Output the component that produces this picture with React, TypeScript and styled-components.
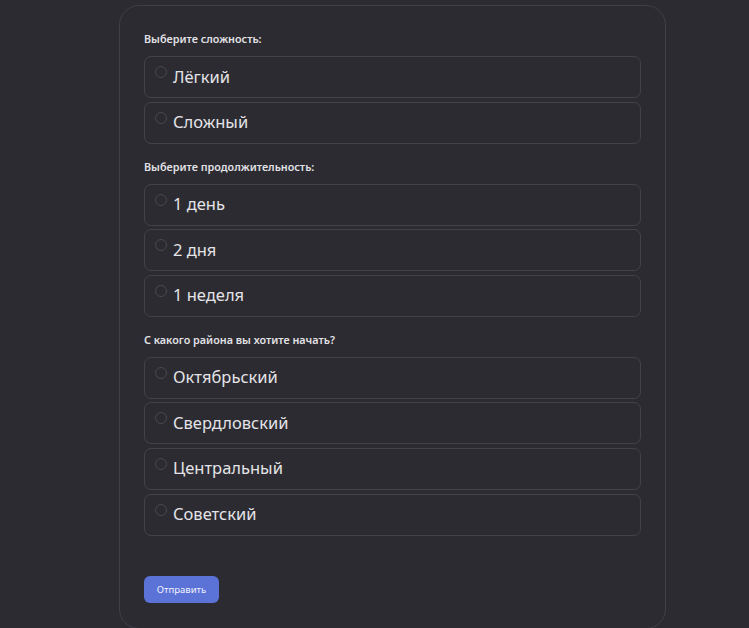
import React from "react";
import styled, { createGlobalStyle } from "styled-components";

const Global = createGlobalStyle`
  html, body { margin: 0; padding: 0; background: #2c2b31; }
  body { font-family: "Noto Sans", "Open Sans", sans-serif; }
`;

const Page = styled.div`
  min-height: 628px;
  padding: 5px 0 0 119px;
  box-sizing: border-box;
`;

const Card = styled.form`
  width: 547px;
  box-sizing: border-box;
  border: 1px solid #403f46;
  border-radius: 20px;
  padding: 25px 24px 25px 24px;
  display: flex;
  flex-direction: column;
`;

const Question = styled.div`
  font-size: 10.8px;
  font-weight: 600;
  color: #e2e2e6;
  line-height: 15px;
  margin: 0 0 10px 0;
`;

const Section = styled.div`
  display: flex;
  flex-direction: column;
  gap: 3.6px;
  margin-bottom: 15px;
`;

const Option = styled.label`
  height: 42px;
  box-sizing: border-box;
  border: 1px solid #434249;
  border-radius: 7px;
  display: flex;
  align-items: center;
  padding-left: 10px;
  cursor: pointer;
`;

const Radio = styled.span`
  width: 12px;
  height: 12px;
  border-radius: 50%;
  border: 1px solid #4a4950;
  box-sizing: border-box;
  align-self: flex-start;
  margin-top: 9px;
  margin-right: 6px;
`;

const OptionText = styled.span`
  font-size: 16.5px;
  color: #e4e4e8;
  line-height: 20px;
  margin-top: -1px;
`;

const Submit = styled.button`
  align-self: flex-start;
  margin-top: 25px;
  width: 75px;
  height: 27px;
  border: none;
  border-radius: 6px;
  background: #5b72d7;
  color: #f2f4ff;
  font-family: "Noto Sans", "Open Sans", sans-serif;
  font-size: 9.5px;
  padding: 0;
`;

const groups: { q: string; options: string[] }[] = [
  { q: "Выберите сложность:", options: ["Лёгкий", "Сложный"] },
  { q: "Выберите продолжительность:", options: ["1 день", "2 дня", "1 неделя"] },
  {
    q: "С какого района вы хотите начать?",
    options: ["Октябрьский", "Свердловский", "Центральный", "Советский"],
  },
];

export default function App() {
  return (
    <>
      <Global />
      <Page>
        <Card onSubmit={(e) => e.preventDefault()}>
          {groups.map((g) => (
            <React.Fragment key={g.q}>
              <Question>{g.q}</Question>
              <Section>
                {g.options.map((o) => (
                  <Option key={o}>
                    <Radio />
                    <OptionText>{o}</OptionText>
                  </Option>
                ))}
              </Section>
            </React.Fragment>
          ))}
          <Submit type="submit">Отправить</Submit>
        </Card>
      </Page>
    </>
  );
}
